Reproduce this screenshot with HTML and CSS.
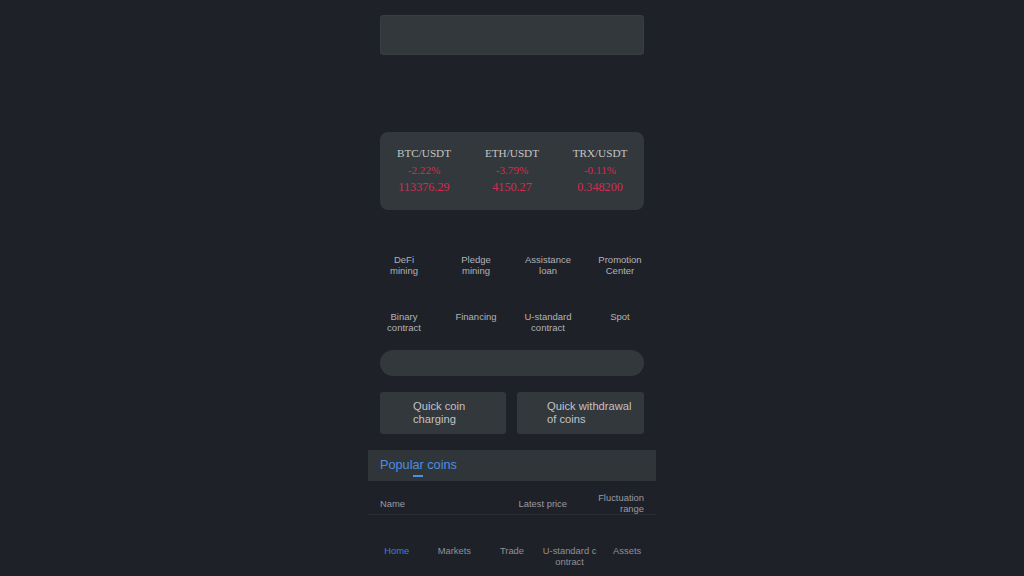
FILE: index.html
```html
<!DOCTYPE html>
<html lang="en">
<head>
<meta charset="utf-8">
<title>Home</title>
<link rel="stylesheet" href="styles.css">
</head>
<body>
<div class="page">
  <div class="inner">
    <div class="banner"></div>

    <div class="ticker">
      <div class="tick">
        <div class="pair">BTC/USDT</div>
        <div class="pct">-2.22%</div>
        <div class="price">113376.29</div>
      </div>
      <div class="tick">
        <div class="pair">ETH/USDT</div>
        <div class="pct">-3.79%</div>
        <div class="price">4150.27</div>
      </div>
      <div class="tick">
        <div class="pair">TRX/USDT</div>
        <div class="pct">-0.11%</div>
        <div class="price">0.348200</div>
      </div>
    </div>
  </div>

  <div class="menu">
    <div class="menu-item">DeFi<br>mining</div>
    <div class="menu-item">Pledge<br>mining</div>
    <div class="menu-item">Assistance<br>loan</div>
    <div class="menu-item">Promotion<br>Center</div>
    <div class="menu-item">Binary<br>contract</div>
    <div class="menu-item">Financing</div>
    <div class="menu-item">U-standard<br>contract</div>
    <div class="menu-item">Spot</div>
  </div>

  <div class="inner">
    <div class="search"></div>
    <div class="quick">
      <div class="quick-btn deposit">Quick coin charging</div>
      <div class="quick-btn withdraw">Quick withdrawal of coins</div>
    </div>
  </div>

  <div class="tabs">
    <div class="tab active">Popular coins</div>
  </div>

  <div class="table-head">
    <div class="col-name">Name</div>
    <div class="col-price">Latest price</div>
    <div class="col-change">Fluctuation range</div>
  </div>

  <nav class="tabbar">
    <div class="tabbar-item current">Home</div>
    <div class="tabbar-item">Markets</div>
    <div class="tabbar-item">Trade</div>
    <div class="tabbar-item">U-standard c ontract</div>
    <div class="tabbar-item">Assets</div>
  </nav>
</div>
</body>
</html>
```

FILE: styles.css
```css
html, body {
  margin: 0;
  padding: 0;
  background: #1f2129;
}

body {
  font-family: "Liberation Sans", Arial, sans-serif;
  color: #b4b4b8;
}

.page {
  width: 288px;
  margin: 0 auto;
  padding-top: 15px;
}

.inner {
  padding: 0 12px;
}

.banner {
  height: 40px;
  background: #33383c;
  border-radius: 4px;
  box-shadow: inset 0 0 0 1px #383d41;
}

.ticker {
  margin-top: 77px;
  height: 78px;
  box-sizing: border-box;
  padding-bottom: 2px;
  background: #33383c;
  border-radius: 8px;
  display: grid;
  grid-template-columns: repeat(3, 1fr);
  align-content: center;
  font-family: "Liberation Serif", "Times New Roman", serif;
  text-align: center;
}

.tick {
  display: flex;
  flex-direction: column;
}

.pair {
  font-size: 11.2px;
  line-height: 17px;
  color: #c6c6c6;
}

.pct {
  font-size: 11.2px;
  line-height: 17px;
  color: #d52c52;
}

.price {
  font-size: 12.2px;
  line-height: 17px;
  color: #d52c52;
}

.menu {
  margin-top: 44px;
  display: grid;
  grid-template-columns: repeat(4, 1fr);
  row-gap: 35px;
}

.menu-item {
  font-size: 9.5px;
  line-height: 11px;
  height: 22px;
  text-align: center;
  color: #b2b2b6;
}

.search {
  margin-top: 17px;
  height: 26px;
  border-radius: 13px;
  background: #33383c;
}

.quick {
  margin-top: 16px;
  display: grid;
  grid-template-columns: 126px 127px;
  column-gap: 11px;
}

.quick-btn {
  height: 42px;
  box-sizing: border-box;
  padding: 0 8px 0 32px;
  display: flex;
  align-items: center;
  background: #33383c;
  border-radius: 3px;
  font-size: 11.2px;
  line-height: 13px;
  color: #c2c2c6;
}

.quick-btn.deposit {
  padding-left: 33px;
}

.quick-btn.withdraw {
  padding-left: 30px;
  padding-right: 6px;
}

.tabs {
  margin-top: 16px;
  height: 31px;
  box-sizing: border-box;
  padding: 0 12px 2px;
  background: #30353a;
  display: flex;
  align-items: center;
}

.tab {
  position: relative;
  font-size: 12.7px;
  line-height: 16px;
  color: #4d8fe3;
}

.tab.active::after {
  content: "";
  position: absolute;
  left: 50%;
  bottom: -4px;
  width: 10px;
  height: 1.5px;
  margin-left: -5px;
  background: #4d8fe3;
}

.table-head {
  padding: 11px 12px 0;
  display: grid;
  grid-template-columns: 1fr auto 77px;
  align-items: center;
  border-bottom: 1px solid #2a2d35;
  font-size: 9.4px;
  line-height: 11px;
  color: #9a9aa0;
}

.col-change {
  padding-left: 22px;
  text-align: right;
}

.tabbar {
  margin-top: 30px;
  display: grid;
  grid-template-columns: repeat(5, 1fr);
}

.tabbar-item {
  font-size: 9.4px;
  line-height: 11px;
  text-align: center;
  color: #8f9096;
  word-break: break-all;
}

.tabbar-item.current {
  color: #3f7fd2;
}
```
